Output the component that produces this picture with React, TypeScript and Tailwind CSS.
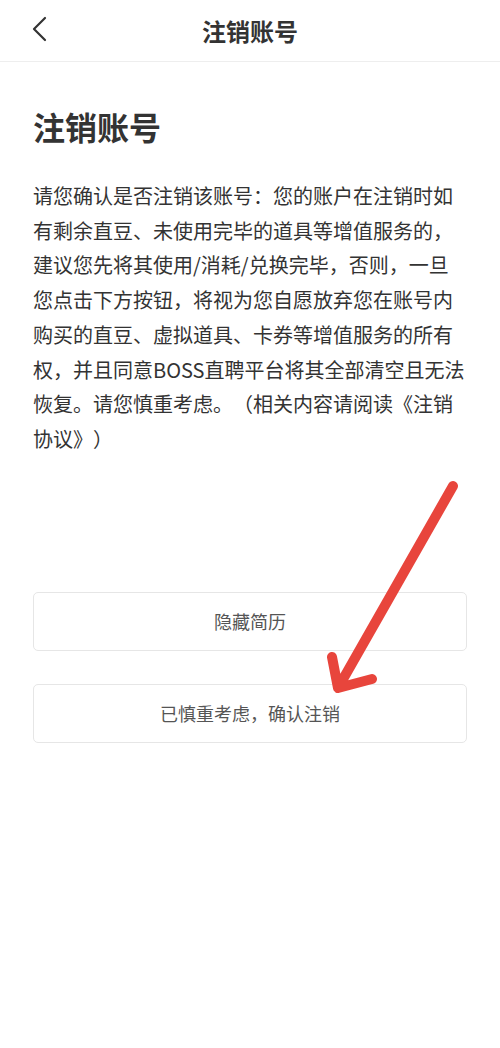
import React from 'react'

const font = { fontFamily: '"Noto Sans CJK SC", "Noto Sans", sans-serif' }

const paragraph =
  '请您确认是否注销该账号：您的账户在注销时如有剩余直豆、未使用完毕的道具等增值服务的，建议您先将其使用/消耗/兑换完毕，否则，一旦您点击下方按钮，将视为您自愿放弃您在账号内购买的直豆、虚拟道具、卡券等增值服务的所有权，并且同意BOSS直聘平台将其全部清空且无法恢复。请您慎重考虑。（相关内容请阅读《注销协议》）'

const Header: React.FC = () => (
  <div className="relative flex h-[62px] items-center justify-center border-b border-[#eeeeee]">
    <svg
      className="absolute left-[30px] top-[16px]"
      width="20"
      height="28"
      viewBox="0 0 20 28"
      fill="none"
    >
      <path d="M15 2 L4 13 L15 24" stroke="#333333" strokeWidth="2.2" strokeLinecap="round" strokeLinejoin="round" />
    </svg>
    <h1 className="text-[24px] font-bold text-[#333333]">注销账号</h1>
  </div>
)

const OutlineButton: React.FC<{ label: string }> = ({ label }) => (
  <button className="flex h-[59px] w-full items-center justify-center rounded-[5px] border border-[#e6e6e6] bg-white text-[18px] text-[#555555]">
    {label}
  </button>
)

export default function App() {
  return (
    <div className="relative min-h-[1048px] w-[500px] overflow-hidden bg-white [text-spacing-trim:space-all]" style={font}>
      <Header />

      <div className="px-[33px]">
        <h2 className="mt-[44px] text-[32px] font-bold leading-[40px] text-[#333333]">注销账号</h2>
        <p className="mt-[33px] text-[20px] leading-[34.7px] text-[#333333]">{paragraph}</p>

        <div className="mt-[135px] flex flex-col gap-[33px]">
          <OutlineButton label="隐藏简历" />
          <OutlineButton label="已慎重考虑，确认注销" />
        </div>
      </div>

      {/* red annotation arrow */}
      <svg className="absolute left-0 top-0" width="500" height="1048" viewBox="0 0 500 1048" fill="none">
        <path
          d="M453 486 L338 688 M332 657 L338 688 L372 679"
          stroke="#e8453c"
          strokeWidth="10"
          strokeLinecap="round"
          strokeLinejoin="round"
        />
      </svg>
    </div>
  )
}
